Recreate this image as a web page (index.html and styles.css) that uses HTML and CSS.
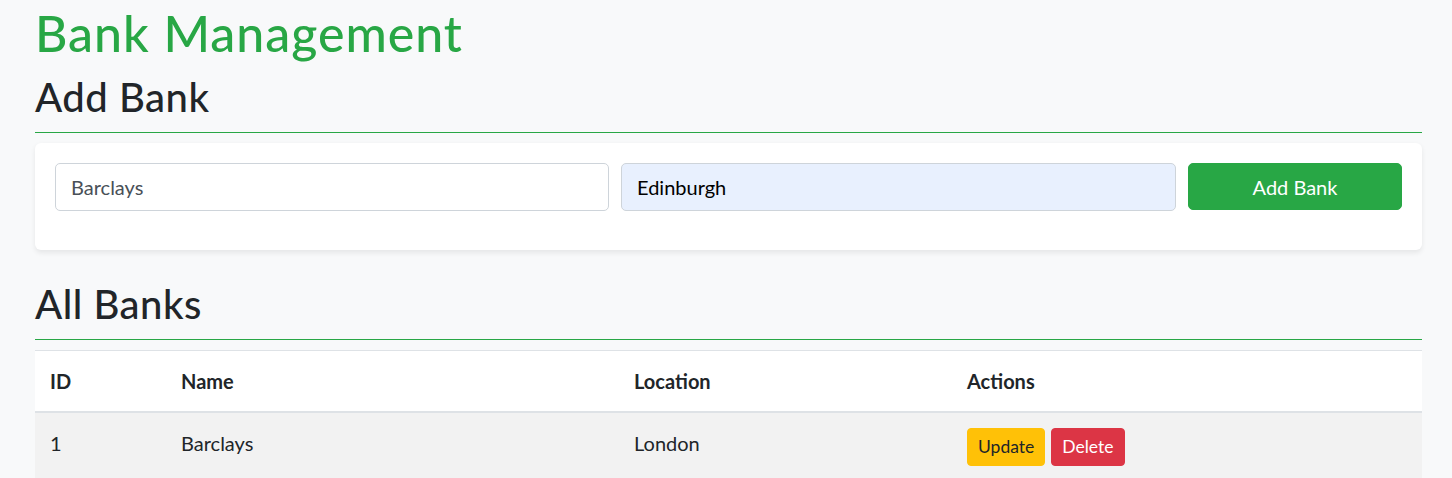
FILE: index.html
```html
<!DOCTYPE html>
<html lang="en">
<head>
<meta charset="utf-8">
<title>Bank Management</title>
<link rel="stylesheet" href="styles.css">
</head>
<body>
<div class="container">
  <h1 class="title">Bank Management</h1>
  <h2 class="section-title">Add Bank</h2>
  <div class="card">
    <form class="form-row">
      <input class="form-control" type="text" value="Barclays">
      <input class="form-control autofill" type="text" value="Edinburgh">
      <button class="btn btn-success" type="button">Add Bank</button>
    </form>
  </div>
  <h2 class="section-title section-gap">All Banks</h2>
  <table class="table">
    <thead>
      <tr>
        <th class="col-id">ID</th>
        <th class="col-name">Name</th>
        <th class="col-loc">Location</th>
        <th class="col-act">Actions</th>
      </tr>
    </thead>
    <tbody>
      <tr class="striped">
        <td>1</td>
        <td>Barclays</td>
        <td>London</td>
        <td><span class="actions"><button class="btn btn-sm btn-warning" type="button">Update</button><button class="btn btn-sm btn-danger" type="button">Delete</button></span></td>
      </tr>
    </tbody>
  </table>
</div>
</body>
</html>
```

FILE: styles.css
```css
* { box-sizing: border-box; }

html, body {
  margin: 0;
  padding: 0;
}

body {
  background: #f8f9fa;
  color: #212529;
  font-family: Lato, "Noto Sans", sans-serif;
  font-size: 20px;
  line-height: 1.5;
}

.container {
  padding: 3px 30px 0 35px;
}

.title {
  margin: 0 0 10px;
  font-size: 50px;
  font-weight: 500;
  line-height: 60px;
  letter-spacing: 1px;
  color: #28a745;
}

.section-title {
  margin: 0 0 10px;
  font-size: 40px;
  font-weight: 500;
  line-height: 48px;
  letter-spacing: 0.5px;
  padding-bottom: 11px;
  border-bottom: 1px solid #28a745;
}

.section-gap {
  margin-top: 30px;
}

.card {
  background: #fff;
  border-radius: 6px;
  box-shadow: 0 2.5px 5px rgba(0, 0, 0, 0.075);
  padding: 20px 20px 39px;
}

.form-row {
  display: grid;
  grid-template-columns: 554fr 555fr 214fr;
  gap: 12px;
  margin: 0;
}

.form-control {
  height: 48px;
  padding: 7px 15px;
  font-family: inherit;
  font-size: 20px;
  color: #495057;
  background: #fff;
  border: 1px solid #ced4da;
  border-radius: 5px;
  outline: none;
  min-width: 0;
}

.form-control.autofill {
  background: #e8f0fe;
  color: #000;
}

.btn {
  font-family: inherit;
  font-size: 20px;
  line-height: 1.5;
  padding: 7px 15px;
  border: 1px solid transparent;
  border-radius: 5px;
  cursor: pointer;
}

.btn-success {
  background: #28a745;
  border-color: #28a745;
  color: #fff;
  height: 47px;
}

.btn-sm {
  font-size: 17.5px;
  line-height: 26px;
  padding: 5px 10px;
  border-radius: 4px;
}

.btn-warning {
  background: #ffc107;
  border-color: #ffc107;
  color: #212529;
}

.btn-danger {
  background: #dc3545;
  border-color: #dc3545;
  color: #fff;
}

.actions {
  display: inline-flex;
  gap: 6px;
}

.table {
  width: 100%;
  border-collapse: collapse;
  background: #fff;
  text-align: left;
}

.table th,
.table td {
  padding: 15px;
  vertical-align: top;
  border-top: 1px solid #dee2e6;
}

.table thead th {
  font-weight: 700;
  border-bottom: 2px solid #dee2e6;
  line-height: 30px;
}

.table tbody td {
  border-top: none;
}

.table td {
  line-height: 30px;
}

.striped {
  background: #f2f2f2;
}

.col-id { width: 131px; }
.col-name { width: 453px; }
.col-loc { width: 333px; }
```
